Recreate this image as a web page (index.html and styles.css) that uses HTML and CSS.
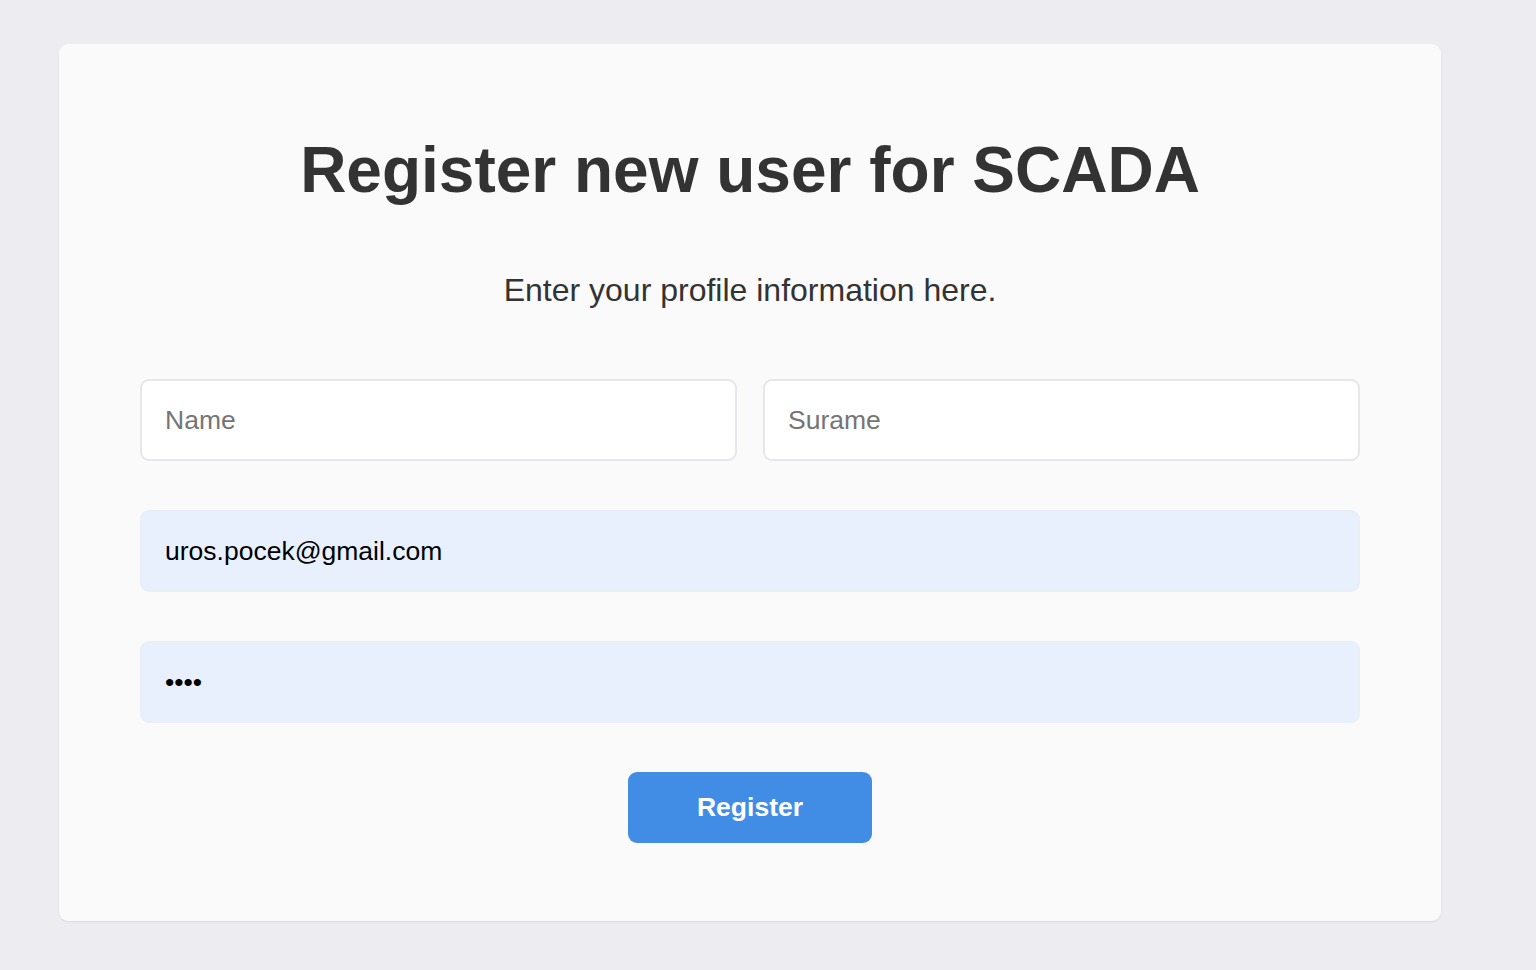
FILE: index.html
```html
<!DOCTYPE html>
<html lang="en">
<head>
<meta charset="utf-8">
<title>Register</title>
<link rel="stylesheet" href="styles.css">
</head>
<body>
<main class="card">
  <h1 class="title">Register new user for SCADA</h1>
  <p class="subtitle">Enter your profile information here.</p>
  <form class="form">
    <div class="row">
      <input class="field" type="text" placeholder="Name">
      <input class="field" type="text" placeholder="Surame">
    </div>
    <input class="field filled" type="email" value="uros.pocek@gmail.com">
    <input class="field filled" type="password" value="abcd">
    <button class="btn" type="button">Register</button>
  </form>
</main>
</body>
</html>
```
FILE: styles.css
```css
html, body {
  margin: 0;
  padding: 0;
}
body {
  background: #edecf0;
  font-family: "Liberation Sans", Arial, Helvetica, sans-serif;
  color: #333;
  min-height: 970px;
  padding: 44px 0 0 59px;
  box-sizing: border-box;
}
.card {
  width: 1382px;
  box-sizing: border-box;
  background: #fafafa;
  border-radius: 9px;
  box-shadow: 0 1px 2px rgba(0, 0, 0, 0.08);
  padding: 89px 81px 78px 81px;
  text-align: center;
}
.title {
  margin: 0;
  font-size: 64px;
  line-height: 74px;
  font-weight: 700;
  color: #333;
}
.subtitle {
  margin: 65px 0 70px;
  font-size: 32px;
  line-height: 37px;
  color: #333;
}
.form {
  display: flex;
  flex-direction: column;
  gap: 49px;
  align-items: stretch;
}
.row {
  display: grid;
  grid-template-columns: 1fr 1fr;
  gap: 26px;
}
.field {
  box-sizing: border-box;
  height: 82px;
  width: 100%;
  margin: 0;
  padding: 0 23px;
  border: 2px solid #e7e7eb;
  border-radius: 9px;
  background: #fff;
  font-family: "Liberation Sans", Arial, Helvetica, sans-serif;
  font-size: 26.5px;
  color: #000;
  outline: none;
}
.field::placeholder {
  color: #757575;
}
.field.filled {
  background: #e8f0fd;
  border-color: #e8eff9;
}
.btn {
  align-self: center;
  width: 244px;
  height: 71px;
  border: none;
  border-radius: 9px;
  background: #418de6;
  color: #fff;
  font-family: "Liberation Sans", Arial, Helvetica, sans-serif;
  font-size: 26.5px;
  font-weight: 700;
  cursor: pointer;
}
```
